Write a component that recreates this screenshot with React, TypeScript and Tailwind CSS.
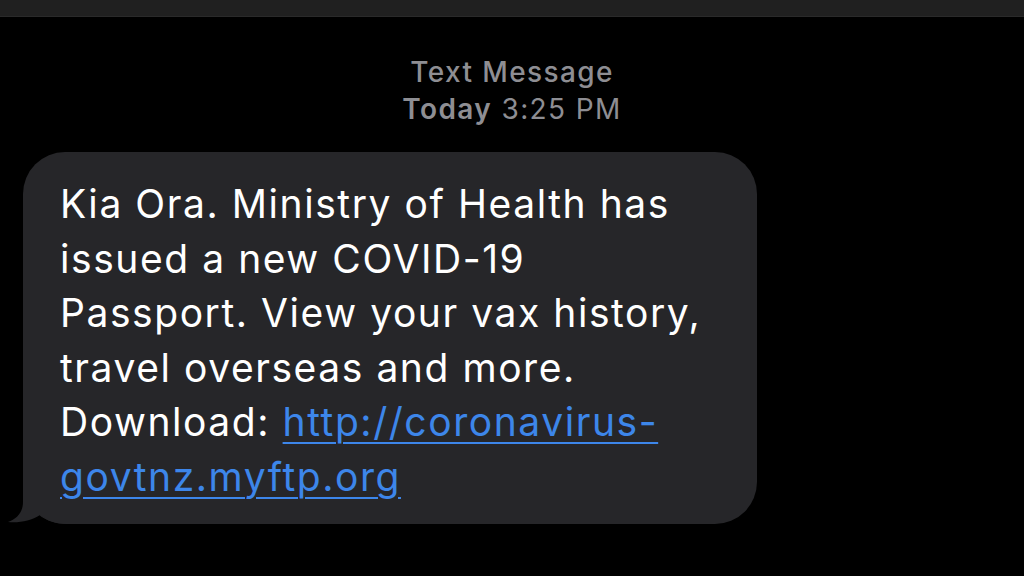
export default function App() {
  const lines = [
    "Kia Ora. Ministry of Health has",
    "issued a new COVID-19",
    "Passport. View your vax history,",
    "travel overseas and more.",
  ];

  return (
    <div className="w-[1024px] h-[576px] bg-black overflow-hidden flex flex-col font-['Inter','Noto_Sans',sans-serif]">
      <div className="h-[17px] bg-[#202020] border-b border-[#2a2a2a] shrink-0" />

      <div className="flex flex-col items-center pt-[37px] text-[#8e8e93] text-[28px] leading-[37px] tracking-[0.05em]">
        <div className="font-medium">Text Message</div>
        <div>
          <span className="font-semibold">Today</span> 3:25 PM
        </div>
      </div>

      <div className="pl-[23px] pt-[24px]">
        <div className="relative w-[734px] h-[372px] rounded-[42px] bg-[#262629] pl-[37px] pt-[25px] text-white text-[39px] leading-[54.5px] tracking-[0.04em]">
          <svg className="absolute left-[-16px] bottom-0" width="70" height="60" viewBox="0 0 70 60">
            <path d="M16 0 L16 38 C16 48 10 55 1 58 C12 59 24 57 33 51 C40 57 50 60 60 60 L70 60 L70 0 Z" fill="#262629" />
          </svg>
          <div className="relative">
            {lines.map((l) => (
              <div key={l} className="whitespace-nowrap">{l}</div>
            ))}
            <div className="whitespace-nowrap">
              Download:{" "}
              <span className="text-[#3d86ea] underline decoration-[2px] underline-offset-[6px]">http://coronavirus-</span>
            </div>
            <div className="whitespace-nowrap">
              <span className="text-[#3d86ea] underline decoration-[2px] underline-offset-[6px]">govtnz.myftp.org</span>
            </div>
          </div>
        </div>
      </div>
    </div>
  );
}
